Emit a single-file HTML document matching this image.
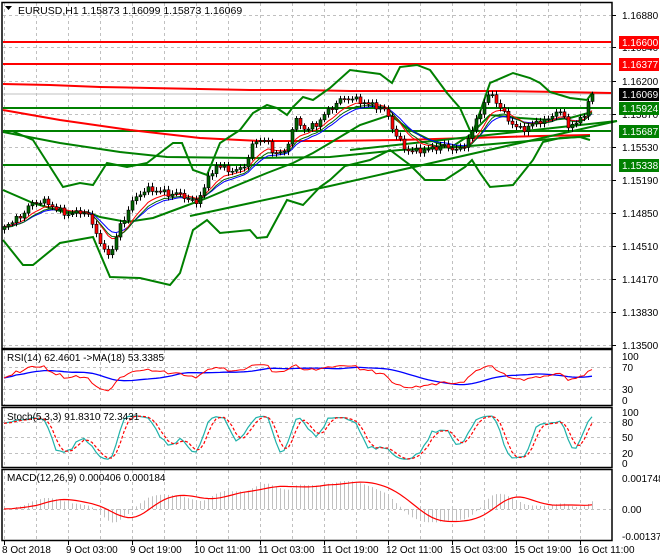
<!DOCTYPE html>
<html><head><meta charset="utf-8"><style>
html,body{margin:0;padding:0;background:#fff;width:660px;height:560px;overflow:hidden}
svg{display:block;font-family:"Liberation Sans",sans-serif}
</style></head><body>
<svg id="s" width="660" height="560" viewBox="0 0 660 560" xmlns="http://www.w3.org/2000/svg">
<rect width="660" height="560" fill="#fff"/>
<g id="grid" stroke="#c0c0c0" stroke-dasharray="3,3" stroke-width="1"></g>
<g id="main"></g>
<g id="frames" fill="none" stroke="#000" stroke-width="1.5">
<rect x="2" y="2.5" width="610" height="346"/>
<rect x="2" y="349.5" width="610" height="56"/>
<rect x="2" y="407.5" width="610" height="60"/>
<rect x="2" y="469.5" width="610" height="71"/>
</g>
<g id="axis" font-size="10" fill="#000"></g>
<text x="18" y="14" font-size="10.5">EURUSD,H1  1.15873 1.16099 1.15873 1.16069</text>
<path d="M5 6 L12 6 L8.5 10 Z" fill="#000"/>
<text x="7" y="361" font-size="10">RSI(14) 62.4601  -&gt;MA(18) 53.3385</text>
<text x="7" y="420" font-size="10">Stoch(5,3,3) 91.8310 72.3431</text>
<text x="7" y="481" font-size="10">MACD(12,26,9) 0.000406 0.000184</text>
</svg>
<script>
var NS="http://www.w3.org/2000/svg";
function el(p,t,a){var e=document.createElementNS(NS,t);for(var k in a)e.setAttribute(k,a[k]);p.appendChild(e);return e;}
var S=document.getElementById('s'),G=document.getElementById('grid'),M=document.getElementById('main'),A=document.getElementById('axis');
for(var x=4;x<612;x+=32){el(G,'line',{x1:x+.5,y1:3,x2:x+.5,y2:348});el(G,'line',{x1:x+.5,y1:350,x2:x+.5,y2:405});el(G,'line',{x1:x+.5,y1:408,x2:x+.5,y2:467});el(G,'line',{x1:x+.5,y1:470,x2:x+.5,y2:540});}
var pl=[15,47,81,114,147,180,213,246,279,312,345];
pl.forEach(function(y){el(G,'line',{x1:3,y1:y+.5,x2:611,y2:y+.5});});
[367,389].forEach(function(y){el(G,'line',{x1:3,y1:y+.5,x2:611,y2:y+.5});});
[422,437,453].forEach(function(y){el(G,'line',{x1:3,y1:y+.5,x2:611,y2:y+.5});});
[509].forEach(function(y){el(G,'line',{x1:3,y1:y+.5,x2:611,y2:y+.5});});
var pv=["1.16880","1.16540","1.16200","1.15870","1.15530","1.15190","1.14850","1.14510","1.14170","1.13830","1.13500"];
pl.forEach(function(y,i){el(A,'line',{x1:612,y1:y+.5,x2:616,y2:y+.5,stroke:'#000'});var t=el(A,'text',{x:622,y:y+4});t.textContent=pv[i];});
[[356,"100"],[367,"70"],[389,"30"],[400,"0"]].forEach(function(a){var t=el(A,'text',{x:622,y:a[0]+4});t.textContent=a[1];});
[[412,"100"],[422,"80"],[437,"50"],[453,"20"],[463,"0"]].forEach(function(a){var t=el(A,'text',{x:622,y:a[0]+4});t.textContent=a[1];});
[[478,"0.001748"],[509,"0.00"],[536,"-0.001371"]].forEach(function(a){var t=el(A,'text',{x:622,y:a[0]+4});t.textContent=a[1];});
var dl=["8 Oct 2018","9 Oct 03:00","9 Oct 19:00","10 Oct 11:00","11 Oct 03:00","11 Oct 19:00","12 Oct 11:00","15 Oct 03:00","15 Oct 19:00","16 Oct 11:00"];
dl.forEach(function(d,i){var x=4+64*i;el(A,'line',{x1:x+.5,y1:541,x2:x+.5,y2:545,stroke:'#000'});var t=el(A,'text',{x:i==0?2:x-2,y:553});t.textContent=d;});
var P=[[4,225],[15,215],[30,205],[45,207],[60,208],[75,210],[85,215],[95,235],[105,255],[112,245],[118,225],[130,205],[145,195],[160,188],[175,190],[185,200],[195,210],[205,185],[215,160],[225,165],[235,175],[245,170],[255,140],[265,135],[275,150],[285,155],[295,125],[305,130],[315,120],[325,110],[340,105],[355,100],[365,98],[375,102],[385,113],[395,140],[405,150],[420,145],[435,150],[450,152],[460,148],[470,130],[480,110],[490,97],[500,112],[510,120],[520,124],[535,125],[548,125],[558,108],[568,120],[578,120],[586,112],[592,94]];
function interp(pts,x){for(var i=1;i<pts.length;i++){if(x<=pts[i][0]){var a=pts[i-1],b=pts[i];return a[1]+(b[1]-a[1])*(x-a[0])/(b[0]-a[0]);}}return pts[pts.length-1][1];}
var X=[],C=[],O=[],H=[],L=[];
for(var x=4,i=0;x<=592;x+=4,i++){X.push(x);var c=interp(P,x)+5*Math.sin(i*0.5)+2*Math.sin(i*1.7)+1.5*Math.cos(i*2.9);if(x==592)c=94;C.push(c);}
for(var i=0;i<C.length;i++){O[i]=i?C[i-1]:C[0]+3;H[i]=Math.min(O[i],C[i])-2-2*Math.abs(Math.sin(i*3.1));L[i]=Math.max(O[i],C[i])+2+2*Math.abs(Math.cos(i*2.3));}
function poly(pts,col,w,dash){var d=pts.map(function(p,i){return (i?'L':'M')+p[0].toFixed(1)+' '+p[1].toFixed(1);}).join(' ');var a={d:d,fill:'none',stroke:col,'stroke-width':w};if(dash)a['stroke-dasharray']=dash;return el(M,'path',a);}
[[42,'#ff0000'],[64,'#ff0000']].forEach(function(l){poly([[3,l[0]],[611,l[0]]],l[1],2);});
poly([[3,94],[611,94]],'#c0c0c0',1);
[108,131,165].forEach(function(y){poly([[3,y],[611,y]],'#008000',2);});
poly([[3,84],[50,85],[100,87],[150,88],[200,89],[250,90],[300,90],[350,91],[420,91],[500,91],[560,92],[611,93]],'#ff0000',2);
poly([[3,110],[60,120],[130,130],[200,138],[260,141],[330,141],[400,140],[470,138],[540,136],[590,135]],'#ff0000',2);
poly([[3,132],[60,143],[120,152],[167,157],[250,158],[330,157],[400,150],[470,146],[540,140],[590,136]],'#008000',2);
poly([[190,216],[330,186],[617,121]],'#008000',2);
poly([[350,150],[617,121]],'#008000',2);
poly([[3,132],[12,131],[33,140],[63,187],[80,183],[93,185],[107,163],[127,167],[147,163],[173,143],[182,143],[193,170],[207,175],[220,143],[240,130],[253,113],[267,105],[277,108],[287,115],[293,107],[303,97],[313,100],[330,88],[350,70],[365,72],[380,74],[392,83],[400,67],[417,65],[430,70],[447,93],[460,108],[472,135],[480,112],[490,83],[513,73],[530,78],[540,83],[550,92],[570,98],[587,100],[592,93]],'#008000',2);
poly([[3,240],[23,265],[33,265],[60,243],[93,237],[110,277],[140,278],[170,285],[180,273],[193,230],[207,220],[220,233],[250,230],[257,238],[267,237],[287,200],[303,205],[320,187],[330,180],[345,166],[370,160],[390,150],[410,165],[425,180],[445,180],[465,167],[472,160],[480,173],[490,187],[513,185],[533,160],[543,142],[560,138],[580,137],[590,140]],'#008000',2);
poly([[3,190],[33,203],[67,213],[87,212],[100,217],[127,222],[153,218],[180,208],[207,198],[233,187],[267,173],[293,163],[313,153],[330,143],[360,125],[390,115],[410,130],[430,140],[450,148],[470,135],[490,115],[520,118],[550,120],[570,118],[592,112]],'#008000',2);
function ema(a,n){var k=2/(n+1),r=[a[0]];for(var i=1;i<a.length;i++)r.push(r[i-1]+k*(a[i]-r[i-1]));return r;}
var e1=ema(C,8),e2=ema(C,13),e3=ema(C,10);
poly(X.map(function(x,i){return[x,e2[i]];}),'#0000ff',1);
poly(X.map(function(x,i){return[x,e1[i]];}),'#ff0000',1);
poly(X.map(function(x,i){return[x,e3[i]+1];}),'#006400',1);
for(var i=0;i<C.length;i++){var x=X[i];el(M,'line',{x1:x+.5,y1:H[i],x2:x+.5,y2:L[i],stroke:'#000','stroke-width':1});var up=C[i]<O[i];var t=Math.min(O[i],C[i]),h=Math.max(1,Math.abs(O[i]-C[i]));el(M,'rect',{x:x-1,y:t,width:3,height:h,fill:up?'#006400':'#ff0000',stroke:'#000','stroke-width':.6});}
var p=C.map(function(c){return -c;}),rsi=[];var ag=0,al=0;
for(var i=0;i<p.length;i++){var d=i?p[i]-p[i-1]:0;var g=Math.max(d,0),l=Math.max(-d,0);if(i==0){ag=1;al=1;}ag=(ag*13+g)/14;al=(al*13+l)/14;rsi.push(100-100/(1+ag/al));}
var rm=rsi.map(function(v,i){var s=0,n=0;for(var j=Math.max(0,i-17);j<=i;j++){s+=rsi[j];n++;}return s/n;});
function ry(v){return 356+(100-v)*0.44;}
poly(X.map(function(x,i){return[x,ry(rm[i])];}),'#0000ff',1.3);
poly(X.map(function(x,i){return[x,ry(rsi[i])];}),'#ff0000',1);
var k=[];for(var i=0;i<p.length;i++){var hi=-1e9,lo=1e9;for(var j=Math.max(0,i-4);j<=i;j++){hi=Math.max(hi,-H[j]);lo=Math.min(lo,-L[j]);}k.push((p[i]-lo)/(hi-lo||1)*100);}
function sma(a,n){return a.map(function(v,i){var s=0,c=0;for(var j=Math.max(0,i-n+1);j<=i;j++){s+=a[j];c++;}return s/c;});}
var ks=sma(k,3),ds=sma(ks,3);
function sy(v){return 412+(100-v)*0.51;}
poly(X.map(function(x,i){return[x,sy(ks[i])];}),'#20b2aa',1.2);
poly(X.map(function(x,i){return[x,sy(ds[i])];}),'#ff0000',1.2,'3,2');
var m12=ema(p,12),m26=ema(p,26),macd=m12.map(function(v,i){return v-m26[i];});var sig=sma(macd,9);
var mx=Math.max.apply(null,macd.map(Math.abs));var sc=28/mx;
for(var i=0;i<X.length;i++){el(M,'line',{x1:X[i]+.5,y1:509,x2:X[i]+.5,y2:509-macd[i]*sc,stroke:'#c0c0c0','stroke-width':1});}
poly(X.map(function(x,i){return[x,509-sig[i]*sc];}),'#ff0000',1.2);
[[42,'#ff0000','1.16600','#fff'],[64,'#ff0000','1.16377','#fff'],[94,'#000','1.16069','#fff'],[108,'#008000','1.15924','#fff'],[131,'#008000','1.15687','#fff'],[165,'#008000','1.15338','#fff']].forEach(function(a){el(A,'rect',{x:619,y:a[0]-6,width:40,height:13,fill:a[1]});var t=el(A,'text',{x:622,y:a[0]+4,fill:a[3]});t.textContent=a[2];});
</script>
</body></html>
